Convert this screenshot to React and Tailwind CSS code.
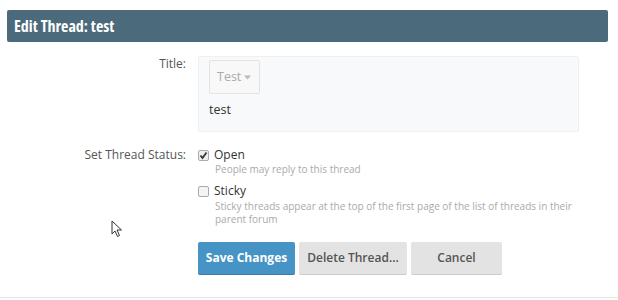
import React from 'react';

function Cursor() {
  return (
    <svg className="absolute left-[111px] top-[220px]" width="13" height="18" viewBox="0 0 13 18">
      <path d="M1 1 L1 14 L4 11 L6.5 16.5 L8.5 15.5 L6 10 L10.5 10 Z" fill="#fff" stroke="#333" strokeWidth="1" strokeLinejoin="round" />
    </svg>
  );
}

export default function App() {
  return (
    <div className="relative w-[618px] h-[300px] bg-white overflow-hidden font-['Open_Sans',sans-serif] text-[12px] text-[#333]">
      <div className="pt-[10px] pl-[7px]">
        <div className="w-[601px] h-[32px] bg-[#4b6a7c] rounded-[2px] flex items-center pl-[7px]">
          <h1 className="text-white font-bold text-[16px] [font-stretch:75%]">Edit Thread: test</h1>
        </div>
      </div>

      <div className="flex mt-[14px]">
        <div className="w-[186px] text-right text-[#555] leading-[16px]">Title:</div>
        <div className="ml-[12px] w-[381px] h-[76px] bg-[#f8f9fa] border border-[#eef0f2] rounded-[2px] px-[10px] pt-[3px]">
          <div className="inline-flex items-center h-[34px] pl-[7px] pr-[8px] border border-[#e3e3e3] bg-[#f8f8f8] text-[#aaa] text-[12.5px] rounded-[2px]">
            Test
            <svg className="ml-[3px]" width="7" height="5" viewBox="0 0 7 5">
              <path d="M0 0.5 L7 0.5 L3.5 4.5 Z" fill="#bbb" />
            </svg>
          </div>
          <div className="mt-[7px] text-[12.5px] text-[#333]">test</div>
        </div>
      </div>

      <div className="flex mt-[15px]">
        <div className="w-[186px] text-right text-[#555] leading-[16px]">Set Thread Status:</div>
        <div className="ml-[12px] w-[384px]">
          <label className="flex items-center gap-[5px] h-[16px]">
            <span className="w-[11px] h-[11px] border border-[#aaa] rounded-[2px] bg-[#eee] flex items-center justify-center">
              <svg width="9" height="9" viewBox="0 0 9 9">
                <path d="M1.5 4.5 L3.5 7 L7.5 1.5" fill="none" stroke="#333" strokeWidth="1.8" />
              </svg>
            </span>
            <span className="text-[#333]">Open</span>
          </label>
          <p className="pl-[17px] text-[10px] text-[#aaa] leading-[13px]">People may reply to this thread</p>
          <label className="flex items-center gap-[5px] h-[16px] mt-[7px]">
            <span className="w-[11px] h-[11px] border border-[#aaa] rounded-[2px] bg-[#f4f4f4]"></span>
            <span className="text-[#333]">Sticky</span>
          </label>
          <p className="pl-[17px] text-[10px] text-[#aaa] leading-[13px] mt-[1px]">
            Sticky threads appear at the top of the first page of the list of threads in their parent forum
          </p>
        </div>
      </div>

      <div className="flex gap-[4px] ml-[198px] mt-[16px]">
        <button className="h-[33px] w-[97px] bg-[#4693c6] text-white font-bold text-[12px] rounded-[2px] border-b border-[#3a7bab]">
          Save Changes
        </button>
        <button className="h-[33px] w-[108px] bg-[#e3e3e3] text-[#555] font-semibold text-[12px] rounded-[2px] border-b border-[#ccc]">
          Delete Thread...
        </button>
        <button className="h-[33px] w-[91px] bg-[#e3e3e3] text-[#555] font-semibold text-[12px] rounded-[2px] border-b border-[#ccc]">
          Cancel
        </button>
      </div>

      <div className="absolute left-0 right-0 top-[297px] h-[1px] bg-[#e6e6e6]"></div>
      <Cursor />
    </div>
  );
}
